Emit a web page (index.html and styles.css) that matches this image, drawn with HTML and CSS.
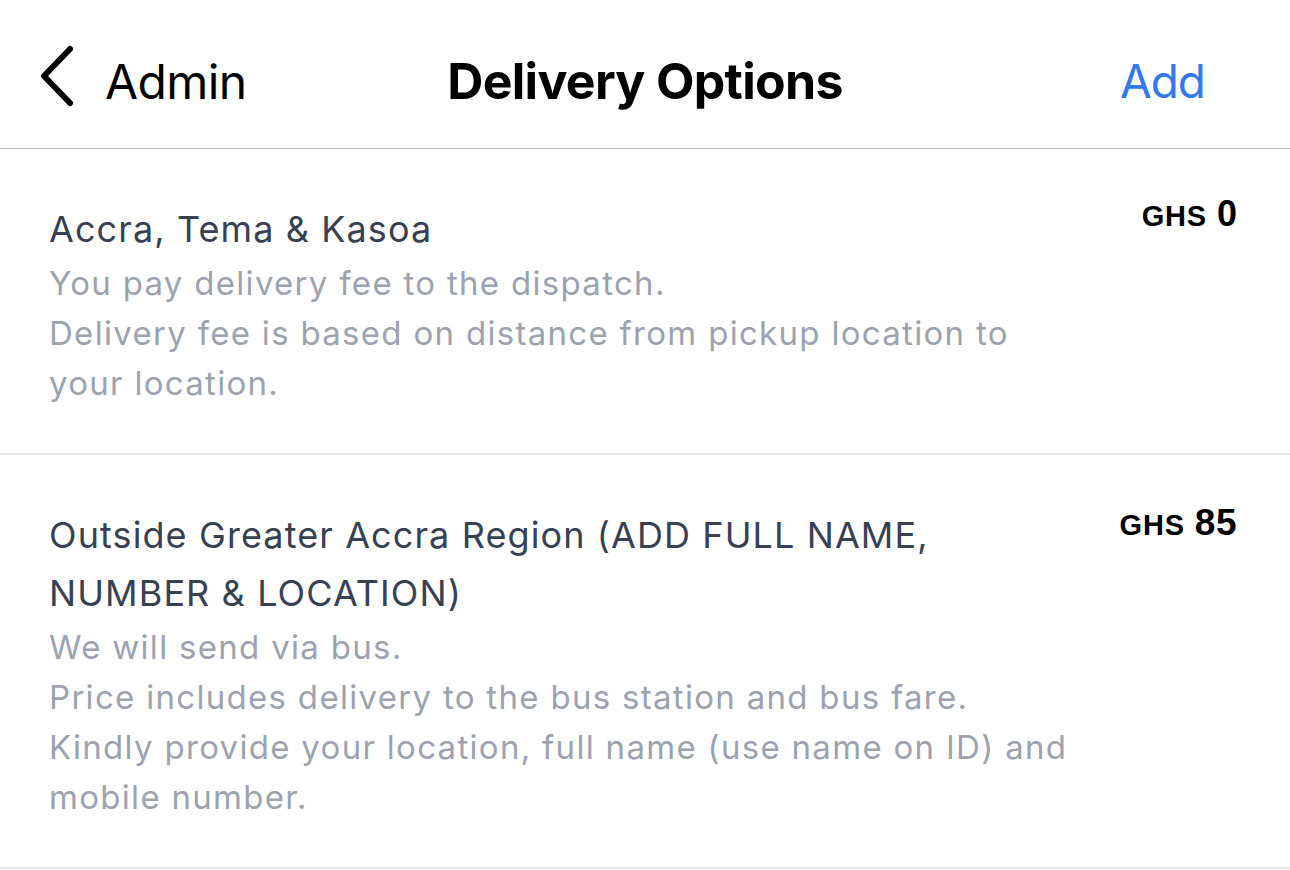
FILE: index.html
```html
<!DOCTYPE html>
<html lang="en">
<head>
<meta charset="utf-8">
<title>Delivery Options</title>
<link rel="stylesheet" href="styles.css">
</head>
<body>
<header class="navbar">
  <div class="nav-left">
    <svg class="chevron" viewBox="0 0 40 64" width="40" height="64" aria-hidden="true">
      <polyline points="32,5 6,32 32,59" fill="none" stroke="#000" stroke-width="6" stroke-linecap="round" stroke-linejoin="round"/>
    </svg>
    <span class="back-label">Admin</span>
  </div>
  <h1 class="nav-title">Delivery Options</h1>
  <div class="nav-right"><span class="add">Add</span></div>
</header>
<main class="list">
  <section class="option">
    <div class="option-text">
      <div class="option-title">Accra, Tema &amp; Kasoa</div>
      <div class="option-desc">You pay delivery fee to the dispatch.
Delivery fee is based on distance from pickup location to your location.</div>
    </div>
    <div class="price"><span class="cur">GHS</span><span class="amt">0</span></div>
  </section>
  <section class="option">
    <div class="option-text">
      <div class="option-title">Outside Greater Accra Region (ADD FULL NAME, NUMBER &amp; LOCATION)</div>
      <div class="option-desc">We will send via bus.
Price includes delivery to the bus station and bus fare.
Kindly provide your location, full name (use name on ID) and mobile number.</div>
    </div>
    <div class="price"><span class="cur">GHS</span><span class="amt">85</span></div>
  </section>
</main>
</body>
</html>
```
FILE: styles.css
```css
* { box-sizing: border-box; }
html, body { margin: 0; padding: 0; background: #ffffff; }
body {
  font-family: Inter, "Noto Sans", "DejaVu Sans", sans-serif;
  color: #000;
  width: 1290px;
  height: 870px;
  overflow: hidden;
}
.navbar {
  height: 149px;
  border-bottom: 1px solid #b4b4b4;
  display: grid;
  grid-template-columns: 1fr auto 1fr;
  align-items: center;
  padding: 0 38px;
}
.nav-left {
  display: flex;
  align-items: center;
  gap: 27px;
  margin-top: 14px;
}
.chevron { display: block; margin-top: -11px; }
.back-label {
  font-size: 48px;
  font-weight: 400;
  letter-spacing: -0.6px;
}
.nav-title {
  margin: 0;
  font-size: 50px;
  font-weight: 700;
  letter-spacing: -0.7px;
  margin-top: 14px;
}
.nav-right {
  display: flex;
  justify-content: flex-end;
  margin-top: 14px;
  padding-right: 47px;
}
.add {
  color: #3478ee;
  font-size: 46px;
  font-weight: 400;
  letter-spacing: -1px;
}
.list { display: flex; flex-direction: column; }
.option {
  display: flex;
  justify-content: space-between;
  align-items: flex-start;
  padding: 51px 53px 45px 49px;
  border-bottom: 2px solid #e7e7e7;
}
.option-text { width: 1025px; }
.option-title {
  font-size: 36px;
  line-height: 58px;
  color: #374151;
  letter-spacing: 1.1px;
}
.option-desc {
  font-size: 33px;
  line-height: 50px;
  color: #9ca3af;
  white-space: pre-line;
  letter-spacing: 1.3px;
}
.price {
  margin-top: -6px;
  font-family: "Liberation Sans", Arial, sans-serif;
  font-weight: 700;
  white-space: nowrap;
  line-height: 40px;
}
.cur { font-size: 29px; letter-spacing: 0.8px; }
.amt { font-size: 36px; margin-left: 10px; }
.option + .option .price { margin-top: -3px; }
.option + .option .amt { font-size: 37px; letter-spacing: 0.5px; }
```
